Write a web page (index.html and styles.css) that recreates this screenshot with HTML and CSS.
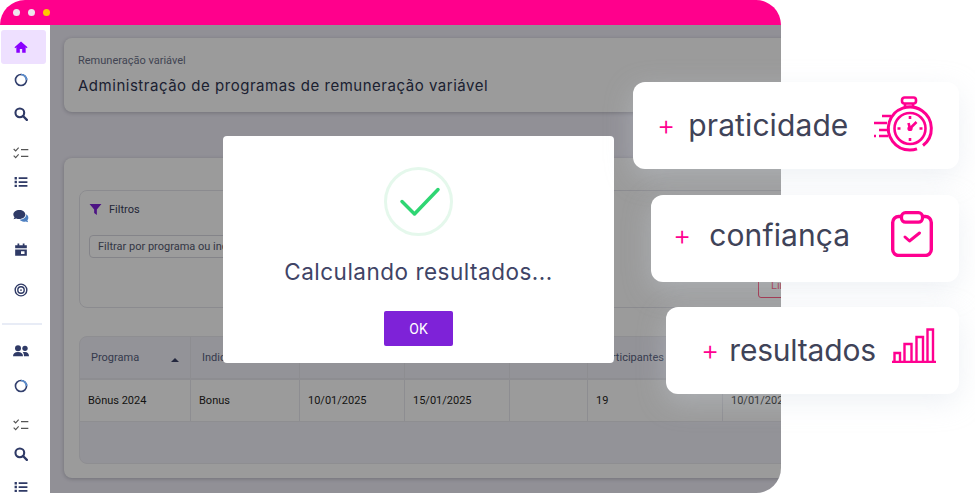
FILE: index.html
```html
<!DOCTYPE html>
<html lang="pt-BR">
<head>
    <meta charset="UTF-8">
    <meta name="viewport" content="width=device-width, initial-scale=1.0">
    <title>Remuneração variável</title>
    <link rel="stylesheet" href="styles.css">
</head>
<body>
<div class="stage">

    <!-- App window -->
    <div class="frame">
        <div class="topbar">
            <span class="dot"></span>
            <span class="dot"></span>
            <span class="dot dot-yellow"></span>
        </div>

        <div class="app">
            <nav class="sidebar">
                <a class="nav-item active">
                    <svg class="ico" viewBox="0 0 24 24"><path fill="currentColor" d="M12 2.500 0.800 12.600 2.200 14 4 12.500V22h6v-6.500h4V22h6v-9.500l1.800 1.500 1.400-1.400z"/></svg>
                </a>
                <a class="nav-item mt-n1">
                    <svg class="ico" viewBox="0 0 24 24"><circle cx="12" cy="12" r="9.500" fill="none" stroke="#33406e" stroke-width="2.800"/><path d="M12 2.500a9.500 9.500 0 0 1 9.500 9.500" fill="none" stroke="#5b8fd0" stroke-width="2.800"/></svg>
                </a>
                <a class="nav-item">
                    <svg class="ico" viewBox="0 0 24 24"><circle cx="10" cy="10" r="7.500" fill="none" stroke="currentColor" stroke-width="3.600"/><path d="M15.500 15.500 22 22" stroke="currentColor" stroke-width="4" stroke-linecap="round"/></svg>
                </a>
                <a class="nav-item mt-5">
                    <svg class="ico ico-wide" viewBox="0 0 24 24"><path d="M1 6l3 3 4.500-5M1 16l3 3 4.500-5" fill="none" stroke="#555" stroke-width="1.700"/><path d="M12 7h11M12 17h11" stroke="#555" stroke-width="2"/></svg>
                </a>
                <a class="nav-item mt-n5">
                    <svg class="ico" viewBox="0 0 24 24"><path fill="currentColor" d="M1 3.500h4v4H1zM1 10h4v4H1zM1 16.500h4v4H1zM8 4h15v3H8zM8 10.500h15v3H8zM8 17h15v3H8z"/></svg>
                </a>
                <a class="nav-item">
                    <svg class="ico ico-wide" viewBox="0 0 24 24"><path fill="currentColor" d="M9.500 3C4.500 3 .5 6 .5 9.800c0 1.600.7 3 1.800 4.100L.8 17l4-1.400c1.400.6 3 .9 4.700.9 5 0 9-3 9-6.700S14.500 3 9.500 3z"/><path fill="#4d7fc0" d="M20 9.500c.2 4.500-4.500 8-10 8.300 1.300 1.700 3.700 2.700 6.300 2.700.9 0 1.800-.1 2.700-.4l3.700 1.400-1.200-3c1-1 1.500-2.200 1.500-3.500 0-2.300-1.100-4.300-3-5.500z"/></svg>
                </a>
                <a class="nav-item">
                    <svg class="ico" viewBox="0 0 24 24"><path fill="currentColor" d="M6 1h3v3h6V1h3v3h4v5H2V4h4zM2 11h20v11H2zM12 14v5h6v-5z"/></svg>
                </a>
                <a class="nav-item mt-6">
                    <svg class="ico" viewBox="0 0 24 24"><circle cx="12" cy="12" r="10" fill="none" stroke="currentColor" stroke-width="2.400"/><circle cx="12" cy="12" r="5.500" fill="none" stroke="currentColor" stroke-width="2.400"/><circle cx="12" cy="12" r="1.500" fill="currentColor"/></svg>
                </a>
                <div class="nav-divider"></div>
                <a class="nav-item mt-9">
                    <svg class="ico ico-wide" viewBox="0 0 24 24"><circle cx="7.500" cy="8" r="4.500" fill="currentColor"/><circle cx="18" cy="8" r="4" fill="currentColor"/><path fill="currentColor" d="M0 20c0-4 2.500-6.500 7.500-6.500S15 16 15 20zM16.500 20c0-2.500-.5-4.500-2-6 1-.4 2.200-.5 3.500-.5 4 0 6 2.500 6 6.500z"/></svg>
                </a>
                <a class="nav-item mt-1">
                    <svg class="ico" viewBox="0 0 24 24"><circle cx="12" cy="12" r="9.500" fill="none" stroke="#33406e" stroke-width="2.800"/><path d="M12 2.500a9.500 9.500 0 0 1 9.500 9.500" fill="none" stroke="#5b8fd0" stroke-width="2.800"/></svg>
                </a>
                <a class="nav-item mt-5">
                    <svg class="ico ico-wide" viewBox="0 0 24 24"><path d="M1 6l3 3 4.500-5M1 16l3 3 4.500-5" fill="none" stroke="#555" stroke-width="1.700"/><path d="M12 7h11M12 17h11" stroke="#555" stroke-width="2"/></svg>
                </a>
                <a class="nav-item mt-n5">
                    <svg class="ico" viewBox="0 0 24 24"><circle cx="10" cy="10" r="7.500" fill="none" stroke="currentColor" stroke-width="3.600"/><path d="M15.500 15.500 22 22" stroke="currentColor" stroke-width="4" stroke-linecap="round"/></svg>
                </a>
                <a class="nav-item mt-n1">
                    <svg class="ico" viewBox="0 0 24 24"><path fill="currentColor" d="M1 3.500h4v4H1zM1 10h4v4H1zM1 16.500h4v4H1zM8 4h15v3H8zM8 10.500h15v3H8zM8 17h15v3H8z"/></svg>
                </a>
            </nav>

            <main class="main">
                <section class="card card-title">
                    <p class="crumb">Remuneração variável</p>
                    <h1 class="page-title">Administração de programas de remuneração variável</h1>
                </section>

                <section class="card card-list">
                    <div class="filters">
                        <div class="filters-head">
                            <svg class="funnel" viewBox="0 0 24 24"><path fill="#7e22d8" d="M1 2h22l-8.500 10v10l-5-3.500V12z"/></svg>
                            <span>Filtros</span>
                        </div>
                        <input class="filter-input" type="text" placeholder="Filtrar por programa ou indicador">
                        <div class="filters-foot">
                            <button class="btn-clear">Limpar</button>
                        </div>
                    </div>

                    <div class="table">
                        <div class="tr th">
                            <div class="cell">Programa<span class="sort"></span></div>
                            <div class="cell">Indicador</div>
                            <div class="cell"></div>
                            <div class="cell"></div>
                            <div class="cell"></div>
                            <div class="cell">Participantes</div>
                            <div class="cell"></div>
                        </div>
                        <div class="tr td">
                            <div class="cell">Bônus 2024</div>
                            <div class="cell">Bonus</div>
                            <div class="cell">10/01/2025</div>
                            <div class="cell">15/01/2025</div>
                            <div class="cell"></div>
                            <div class="cell">19</div>
                            <div class="cell">10/01/2025</div>
                        </div>
                    </div>
                </section>

                <div class="overlay"></div>
            </main>
        </div>

        <!-- Modal -->
        <div class="modal">
            <svg class="modal-check" viewBox="0 0 69 69">
                <circle cx="34.500" cy="34.500" r="33" fill="none" stroke="#e5f8ec" stroke-width="3"/>
                <path d="M18 34.500 30.500 47 54 22.500" fill="none" stroke="#2fd673" stroke-width="3.500" stroke-linecap="round" stroke-linejoin="round"/>
            </svg>
            <h2 class="modal-title">Calculando resultados...</h2>
            <button class="btn-ok">OK</button>
        </div>
    </div>

    <!-- Floating cards -->
    <div class="features">
        <div class="feature feature-1">
            <span class="plus">+</span>
            <span class="feature-text">praticidade</span>
            <svg class="feature-icon icon-watch" viewBox="0 0 60 58">
                <g fill="none" stroke="#ff0090" stroke-width="2.600">
                    <rect x="28" y="1.500" width="14" height="6" rx="2.500"/>
                    <path d="M31 7.500v3.500M39 7.500v3.500"/>
                    <path d="M49 49.500A21.500 21.500 0 1 0 36 54a21.500 21.500 0 0 0 7-1.200" stroke-width="3"/>
                    <circle cx="36" cy="32.500" r="15.500"/>
                    <path d="M34.500 27l1.500 5.500 6.500-6.500"/>
                    <path d="M36 20v3M36 42v3M23.500 32.500h3M45.500 32.500h3"/>
                    <path d="M8 20h9M0 27h13M5 34h8M0 40h2M5 40h9"/>
                </g>
                <circle cx="36" cy="32.500" r="2.600" fill="#ff0090"/>
            </svg>
        </div>
        <div class="feature feature-2">
            <span class="plus">+</span>
            <span class="feature-text">confiança</span>
            <svg class="feature-icon icon-clip" viewBox="0 0 42 46">
                <rect x="1.700" y="5.500" width="38.600" height="39" rx="6" fill="none" stroke="#ff0090" stroke-width="3.400"/>
                <rect x="10.500" y="1.700" width="21" height="9.500" rx="4" fill="#fff" stroke="#ff0090" stroke-width="3.200"/>
                <path d="M14 26l4.500 4 10-8" fill="none" stroke="#ff0090" stroke-width="3" stroke-linecap="round" stroke-linejoin="round"/>
            </svg>
        </div>
        <div class="feature feature-3">
            <span class="plus">+</span>
            <span class="feature-text">resultados</span>
            <svg class="feature-icon icon-bars" viewBox="0 0 44 35">
                <g fill="none" stroke="#ff0090" stroke-width="2.400">
                    <path d="M0 34h44"/>
                    <path d="M2.500 34V25H8v9M12.500 34V16h7v18M24.500 34V9H31v25M35.500 34V1.500H41V34"/>
                </g>
            </svg>
        </div>
    </div>

</div>
</body>
</html>
```

FILE: styles.css
```css
* {
    box-sizing: border-box;
}

body {
    margin: 0;
    background: #fff;
    font-family: "Roboto", "Liberation Sans", sans-serif;
}

.stage {
    position: relative;
    width: 975px;
    height: 494px;
    overflow: hidden;
}

/* App window */
.frame {
    position: relative;
    width: 781px;
    height: 493px;
    border-radius: 25px 25px 25px 0;
    overflow: hidden;
    display: flex;
    flex-direction: column;
}

.topbar {
    flex: none;
    height: 25px;
    background: #ff008c;
    padding-left: 13px;
    display: flex;
    align-items: center;
    gap: 8px;
}

.dot {
    width: 7px;
    height: 7px;
    border-radius: 50%;
    background: #eee6ee;
}

.dot-yellow {
    background: #ffc800;
}

.app {
    flex: 1;
    display: flex;
    min-height: 0;
}

/* Sidebar */
.sidebar {
    flex: none;
    width: 50px;
    background: #fff;
    padding: 5px 0 0 1px;
    display: flex;
    flex-direction: column;
    overflow: hidden;
}

.nav-item {
    flex: none;
    width: 45px;
    height: 34px;
    padding-right: 5px;
    display: flex;
    align-items: center;
    justify-content: center;
    color: #2f3a66;
    border-radius: 3px;
}

.nav-item.active {
    background: #eee0ff;
    color: #8a00ff;
}

.ico {
    width: 14px;
    height: 14px;
}

.ico-wide {
    width: 16px;
    height: 16px;
}

.mt-1 { margin-top: 1px; }
.mt-5 { margin-top: 5px; }
.mt-6 { margin-top: 6px; }
.mt-9 { margin-top: 9px; }
.mt-n1 { margin-top: -1px; }
.mt-n5 { margin-top: -5px; }

.nav-divider {
    flex: none;
    width: 40px;
    height: 2px;
    margin: 16px 0 0 1px;
    background: #e8ecf6;
}

/* Main area, dimmed by the overlay */
.main {
    position: relative;
    flex: 1;
    min-width: 0;
    background: #eeecf6;
    padding: 13px 0 0 14px;
    overflow: hidden;
}

.overlay {
    position: absolute;
    inset: 0;
    background: rgba(0, 0, 0, 0.39);
}

.card {
    width: 800px;
    background: #fefefe;
    border-radius: 8px;
    box-shadow: 0 1px 4px rgba(60, 60, 80, 0.3);
}

.card-title {
    height: 74px;
    padding: 16px 14px;
}

.crumb {
    margin: 0;
    font-size: 11px;
    line-height: 14px;
    color: #6b7088;
}

.page-title {
    margin: 7px 0 0;
    font-family: "Inter", sans-serif;
    font-size: 15px;
    font-weight: 400;
    line-height: 22px;
    letter-spacing: 0.52px;
    color: #2f3550;
}

.card-list {
    height: 320px;
    margin-top: 46px;
    padding: 32px 15px 14px;
}

/* Filters */
.filters {
    height: 118px;
    padding: 0 20px 0 9px;
    border: 1px solid #e4e4ea;
    border-radius: 8px;
}

.filters-head {
    height: 36px;
    display: flex;
    align-items: center;
    gap: 7px;
    font-size: 11px;
    color: #3a405c;
}

.funnel {
    width: 13px;
    height: 13px;
}

.filter-input {
    display: block;
    width: 300px;
    height: 23px;
    margin-top: 8px;
    padding: 0 8px;
    border: 1px solid #d8d8e0;
    border-radius: 4px;
    background: #fff;
    font-family: inherit;
    font-size: 11px;
}

.filter-input::placeholder {
    color: #555a70;
    opacity: 1;
}

.filters-foot {
    display: flex;
    justify-content: flex-end;
    margin-top: 14px;
}

.btn-clear {
    width: 70px;
    height: 26px;
    padding: 0 0 0 12px;
    text-align: left;
    border: 1px solid #ff3d6a;
    border-radius: 3px;
    background: #fff;
    color: #ff3d6a;
    font-family: inherit;
    font-size: 11px;
}

/* Table */
.table {
    height: 128px;
    margin-top: 28px;
    background: #f1f0f8;
    border: 1px solid #e8e8ee;
    border-radius: 8px;
    overflow: hidden;
}

.tr {
    display: grid;
    grid-template-columns: 111px 109px 105px 105px 78px 135px 130px;
    font-size: 11px;
}

.th {
    height: 43px;
    color: #56607e;
    border-bottom: 2px solid #e6e6ee;
}

.td {
    height: 42px;
    background: #fefefe;
    color: #1f1f22;
    border-bottom: 1px solid #e8e8ee;
}

.cell {
    display: flex;
    align-items: center;
    position: relative;
    padding-left: 8px;
    border-right: 1px solid #e6e6ee;
}

.th .cell {
    padding-left: 11px;
}

.sort {
    position: absolute;
    right: 11px;
    top: 21px;
    border: 4px solid transparent;
    border-top: 0;
    border-bottom: 4px solid #3a4166;
}

/* Modal */
.modal {
    position: absolute;
    left: 223px;
    top: 136px;
    width: 391px;
    height: 227px;
    padding-top: 31px;
    background: #fff;
    border-radius: 4px;
    display: flex;
    flex-direction: column;
    align-items: center;
}

.modal-check {
    width: 69px;
    height: 69px;
}

.modal-title {
    margin: 22px 0 0;
    font-family: "Inter", sans-serif;
    font-size: 22.500px;
    font-weight: 400;
    line-height: 28px;
    letter-spacing: 0.5px;
    color: #3f4466;
}

.btn-ok {
    width: 69px;
    height: 35px;
    margin-top: 25px;
    border: 0;
    border-radius: 2px;
    background: #7e22d8;
    color: #fff;
    font-family: inherit;
    font-size: 14px;
}

/* Floating cards */
.features {
    position: absolute;
    top: 82px;
    right: 16px;
    display: flex;
    flex-direction: column;
    align-items: flex-end;
    gap: 26px;
}

.feature {
    position: relative;
    height: 87px;
    padding-bottom: 2px;
    background: #fff;
    border-radius: 12px;
    box-shadow: 0 8px 28px rgba(205, 214, 226, 0.35);
    display: flex;
    align-items: center;
}

.feature-1 { width: 326px; padding-left: 24px; }
.feature-2 { width: 308px; padding-left: 22px; padding-bottom: 7px; }
.feature-3 { width: 293px; padding-left: 35px; margin-top: -1px; }

.plus {
    font-family: "Inter", sans-serif;
    font-size: 28px;
    font-weight: 300;
    line-height: 30px;
    color: #ff0090;
}

.feature-text {
    font-family: "Inter", sans-serif;
    font-size: 30px;
    font-weight: 400;
    line-height: 36px;
    letter-spacing: 0.1px;
    color: #3f4358;
}

.feature-1 .plus { margin-right: 13px; }
.feature-2 .plus { margin-right: 18px; }
.feature-3 .plus { margin-right: 10px; }
.feature-3 .feature-text { letter-spacing: -0.2px; }

.feature-icon {
    position: absolute;
}

.icon-watch {
    width: 60px;
    height: 58px;
    left: 241px;
    top: 14px;
}

.icon-clip {
    width: 42px;
    height: 46px;
    left: 240px;
    top: 16px;
}

.icon-bars {
    width: 44px;
    height: 35px;
    left: 226px;
    top: 21px;
}
```
